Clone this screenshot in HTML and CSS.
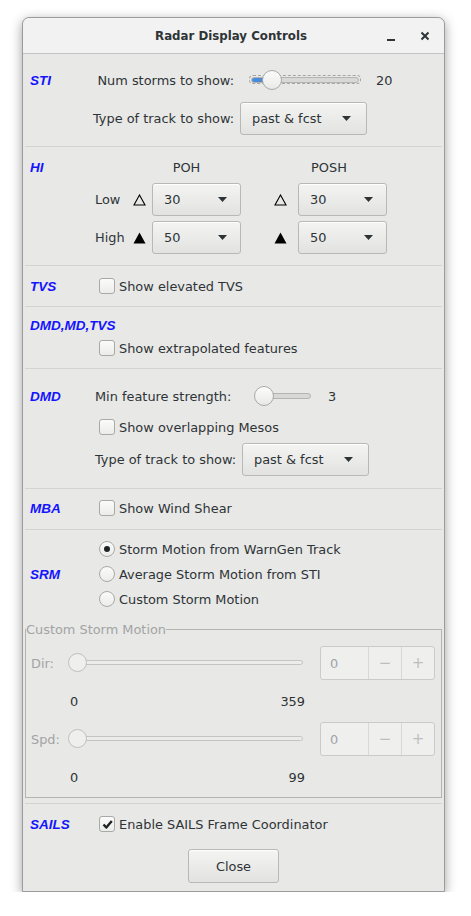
FILE: index.html
```html
<!DOCTYPE html>
<html>
<head>
<meta charset="utf-8">
<link rel="stylesheet" href="styles.css">
</head>
<body>
<div class="window">
  <div class="titlebar">
    <div></div>
    <div class="title">Radar Display Controls</div>
    <div class="tb-buttons">
      <svg class="tb-min" width="10" height="10" viewBox="0 0 10 10"><rect x="1" y="7" width="8" height="2" fill="#2e3436"/></svg>
      <svg class="tb-close" width="10" height="10" viewBox="0 0 10 10"><path d="M1.5 1.5 L8.5 8.5 M8.5 1.5 L1.5 8.5" stroke="#2e3436" stroke-width="2"/></svg>
    </div>
  </div>
  <div class="content">
    <!-- STI -->
    <div class="section sti">
      <div class="tag h24">STI</div>
      <div class="body">
        <div class="row h24">
          <div class="rlabel">Num storms to show:</div>
          <div class="slider sti-slider focus">
            <div class="trough"><div class="fill" style="width:15px"></div></div>
            <div class="knob" style="left:13px"></div>
          </div>
          <div class="val">20</div>
        </div>
        <div class="row h33 mt10">
          <div class="rlabel">Type of track to show:</div>
          <div class="combo wide ml6"><span>past &amp; fcst</span><svg width="9" height="5" viewBox="0 0 9 5"><path d="M0 0 H9 L4.5 5 Z" fill="#2e3436"/></svg></div>
        </div>
      </div>
    </div>
    <div class="sep"></div>
    <!-- HI -->
    <div class="section hi">
      <div class="tag h20">HI</div>
      <div class="body">
        <div class="row h20">
          <div class="lowcell"></div>
          <div class="hdr1">POH</div>
          <div class="hdr2">POSH</div>
        </div>
        <div class="row h33 mt6">
          <div class="lowcell">Low</div>
          <svg class="tri" width="13" height="12" viewBox="0 0 13 12"><path d="M6.5 1 L12 11 H1 Z" fill="none" stroke="#000" stroke-width="1.1"/></svg>
          <div class="combo small ml6"><span>30</span><svg width="9" height="5" viewBox="0 0 9 5"><path d="M0 0 H9 L4.5 5 Z" fill="#2e3436"/></svg></div>
          <svg class="tri gap33" width="13" height="12" viewBox="0 0 13 12"><path d="M6.5 1 L12 11 H1 Z" fill="none" stroke="#000" stroke-width="1.1"/></svg>
          <div class="combo small ml11"><span>30</span><svg width="9" height="5" viewBox="0 0 9 5"><path d="M0 0 H9 L4.5 5 Z" fill="#2e3436"/></svg></div>
        </div>
        <div class="row h33 mt5">
          <div class="lowcell">High</div>
          <svg class="tri" width="13" height="12" viewBox="0 0 13 12"><path d="M6.5 0.5 L12.5 11.5 H0.5 Z" fill="#000"/></svg>
          <div class="combo small ml6"><span>50</span><svg width="9" height="5" viewBox="0 0 9 5"><path d="M0 0 H9 L4.5 5 Z" fill="#2e3436"/></svg></div>
          <svg class="tri gap33" width="13" height="12" viewBox="0 0 13 12"><path d="M6.5 0.5 L12.5 11.5 H0.5 Z" fill="#000"/></svg>
          <div class="combo small ml11"><span>50</span><svg width="9" height="5" viewBox="0 0 9 5"><path d="M0 0 H9 L4.5 5 Z" fill="#2e3436"/></svg></div>
        </div>
      </div>
    </div>
    <div class="sep"></div>
    <!-- TVS -->
    <div class="section tvs">
      <div class="tag h22">TVS</div>
      <div class="body">
        <label class="row h22 check"><span class="cb"></span><span>Show elevated TVS</span></label>
      </div>
    </div>
    <div class="sep"></div>
    <!-- DMD,MD,TVS -->
    <div class="section stack dmdmd">
      <div class="tag h20">DMD,MD,TVS</div>
      <div class="body indent">
        <label class="row h22 check mt2"><span class="cb"></span><span>Show extrapolated features</span></label>
      </div>
    </div>
    <div class="sep"></div>
    <!-- DMD -->
    <div class="section dmd">
      <div class="tag h24">DMD</div>
      <div class="body">
        <div class="row h24">
          <div class="dmdlabel">Min feature strength:</div>
          <div class="slider dmd-slider">
            <div class="trough"><div class="fill" style="width:3px"></div></div>
            <div class="knob" style="left:0px"></div>
          </div>
          <div class="val3">3</div>
        </div>
        <label class="row h22 check mt8"><span class="cb"></span><span>Show overlapping Mesos</span></label>
        <div class="row h33 mt5">
          <div class="dmdlabel2">Type of track to show:</div>
          <div class="combo wide ml6"><span>past &amp; fcst</span><svg width="9" height="5" viewBox="0 0 9 5"><path d="M0 0 H9 L4.5 5 Z" fill="#2e3436"/></svg></div>
        </div>
      </div>
    </div>
    <div class="sep"></div>
    <!-- MBA -->
    <div class="section mba">
      <div class="tag h22">MBA</div>
      <div class="body">
        <label class="row h22 check"><span class="cb"></span><span>Show Wind Shear</span></label>
      </div>
    </div>
    <div class="sep"></div>
    <!-- SRM -->
    <div class="section srm">
      <div class="tag srmtag">SRM</div>
      <div class="body">
        <label class="row h22 check"><span class="rb on"></span><span>Storm Motion from WarnGen Track</span></label>
        <label class="row h22 check mt3"><span class="rb"></span><span>Average Storm Motion from STI</span></label>
        <label class="row h22 check mt3"><span class="rb"></span><span>Custom Storm Motion</span></label>
      </div>
    </div>
    <fieldset class="frame">
      <legend>Custom Storm Motion</legend>
      <div class="frame-inner">
        <div class="frow">
          <div class="flabel">Dir:</div>
          <div class="slider dis-slider">
            <div class="trough"></div>
            <div class="knob" style="left:0px"></div>
          </div>
          <div class="spin"><span class="spin-val">0</span><span class="spin-btn">&minus;</span><span class="spin-btn">+</span></div>
        </div>
        <div class="nums"><span>0</span><span>359</span></div>
        <div class="frow mt12">
          <div class="flabel">Spd:</div>
          <div class="slider dis-slider">
            <div class="trough"></div>
            <div class="knob" style="left:0px"></div>
          </div>
          <div class="spin"><span class="spin-val">0</span><span class="spin-btn">&minus;</span><span class="spin-btn">+</span></div>
        </div>
        <div class="nums"><span>0</span><span>99</span></div>
      </div>
    </fieldset>
    <div class="sep"></div>
    <!-- SAILS -->
    <div class="section sails">
      <div class="tag h22">SAILS</div>
      <div class="body">
        <label class="row h22 check"><span class="cb checked"><svg width="13" height="13" viewBox="0 0 13 13"><path d="M2.5 6.5 L5.3 9.5 L10.8 3" fill="none" stroke="#1e2224" stroke-width="2.4" stroke-linejoin="round"/></svg></span><span>Enable SAILS Frame Coordinator</span></label>
      </div>
    </div>
    <div class="footer">
      <div class="button">Close</div>
    </div>
  </div>
</div>
</body>
</html>
```
FILE: styles.css
```css
html, body {
  margin: 0;
  padding: 0;
  background: #ffffff;
}
body {
  font-family: "DejaVu Sans", sans-serif;
  font-size: 12.9px;
  color: #2e3436;
}
.window {
  margin: 17px 0 0 22px;
  width: 421px;
  border: 1px solid #9b9b9b;
  border-radius: 7px 7px 0 0;
  background: #e8e8e7;
  box-shadow: 0 3px 12px rgba(0,0,0,0.38);
}
.titlebar {
  height: 35px;
  border-bottom: 1px solid #c2c2c2;
  background: #f2f2f2;
  border-radius: 7px 7px 0 0;
  display: grid;
  grid-template-columns: 1fr auto 1fr;
  align-items: center;
}
.title {
  font-weight: bold;
  font-size: 11.8px;
  color: #2e3436;
  padding-right: 5px;
}
.tb-buttons {
  display: flex;
  justify-content: flex-end;
  align-items: center;
  padding-right: 14px;
  gap: 24px;
}
.tb-min { margin-top: 3px; }
.sep {
  height: 1px;
  background: #d3d3d2;
  margin: 0 2px;
}
.section {
  display: flex;
  padding-left: 7px;
}
.section.stack { display: block; }
.tag {
  width: 63px;
  flex: none;
  font-family: "Liberation Sans", Arial, sans-serif;
  font-weight: bold;
  font-style: italic;
  font-size: 13.5px;
  color: #1414ff;
  display: flex;
  align-items: center;
  white-space: nowrap;
}
.body {
  display: flex;
  flex-direction: column;
}
.body.indent { padding-left: 63px; }
.row {
  display: flex;
  align-items: center;
}
.h20 { height: 20px; }
.h22 { height: 22px; }
.h24 { height: 24px; }
.h33 { height: 33px; }
.mt2 { margin-top: 2px; }
.mt3 { margin-top: 3px; }
.mt5 { margin-top: 5px; }
.mt6 { margin-top: 6px; }
.mt8 { margin-top: 8px; }
.mt10 { margin-top: 10px; }
.mt12 { margin-top: 12px; }
.ml6 { margin-left: 6px; }
.ml11 { margin-left: 11px; }

.sti { padding-top: 14px; padding-bottom: 11px; }
.hi { padding-top: 10px; padding-bottom: 11px; }
.tvs { padding-top: 9px; padding-bottom: 9px; }
.dmdmd { padding-top: 8px; padding-bottom: 9px; }
.dmd { padding-top: 15px; padding-bottom: 12px; }
.mba { padding-top: 8px; padding-bottom: 10px; }
.srm { padding-top: 8px; padding-bottom: 11px; }
.sails { padding-top: 9px; }

.rlabel {
  width: 141px;
  text-align: right;
  white-space: nowrap;
}
.val { margin-left: 15px; }
.val3 { margin-left: 17px; }

.combo {
  border: 1px solid #b8b8b5;
  border-radius: 3px;
  background: linear-gradient(#f4f4f3, #e2e2e1);
  box-shadow: inset 0 1px #ffffff;
  display: flex;
  align-items: center;
  justify-content: space-between;
  box-sizing: border-box;
  height: 33px;
}
.combo.wide { width: 127px; padding: 0 15px 0 11px; }
.combo.small { width: 89px; padding: 0 13px 0 11px; }

/* HI */
.lowcell { width: 38px; padding-left: 2px; }
.hdr1 { width: 107px; text-align: center; }
.hdr2 { width: 112px; margin-left: 33px; text-align: center; }
.tri { flex: none; }
.tri.gap33 { margin-left: 33px; }

/* check / radio */
.check { gap: 4px; padding-left: 6px; }
.cb {
  width: 14px;
  height: 14px;
  border: 1px solid #a9a9a6;
  border-radius: 3px;
  background: linear-gradient(#fbfbfb, #ececeb);
  flex: none;
  display: flex;
  align-items: center;
  justify-content: center;
}
.rb {
  width: 14px;
  height: 14px;
  border: 1px solid #a9a9a6;
  border-radius: 50%;
  background: linear-gradient(#fbfbfb, #ececeb);
  flex: none;
  display: flex;
  align-items: center;
  justify-content: center;
}
.rb.on::after {
  content: "";
  width: 6px;
  height: 6px;
  border-radius: 50%;
  background: #1e2224;
}
.srmtag { height: 72px; }

/* sliders */
.slider {
  position: relative;
  height: 24px;
  flex: none;
}
.trough {
  position: absolute;
  top: 9px;
  height: 4px;
  border: 1px solid #b4b4b1;
  border-radius: 3px;
  background: #d8d8d7;
  overflow: hidden;
}
.fill {
  height: 100%;
  background: #4a8ad8;
  border-right: 1px solid #23598f;
}
.knob {
  position: absolute;
  top: 2px;
  border: 1px solid #a9a9a6;
  border-radius: 50%;
  background: linear-gradient(#fcfcfc, #e9e9e8);
  box-sizing: border-box;
  width: 20px;
  height: 20px;
}
.sti-slider { width: 112px; margin-left: 15px; }
.sti-slider .trough { left: 2px; right: 2px; }
.sti-slider.focus::before {
  content: "";
  position: absolute;
  left: 0; right: 0;
  top: 7px; height: 9px;
  border: 1px dashed #a5a5a3;
  border-radius: 4px;
  box-sizing: border-box;
}
.dmdlabel { width: 159px; padding-left: 2px; white-space: nowrap; }
.dmdlabel2 { width: 141px; padding-left: 2px; white-space: nowrap; }
.dmd-slider { width: 57px; }
.dmd-slider .trough { left: 1px; right: 0; }

/* frame */
.frame {
  margin: 0 2px 5px 2px;
  padding: 0;
  border: 1px solid #b4b4b2;
  min-width: 0;
}
.frame legend {
  padding: 0;
  margin-left: 0;
  color: #a2a4a4;
  line-height: 17px;
  height: 17px;
}
.frame-inner {
  padding: 8px 6px 11px 5px;
}
.frow {
  display: flex;
  align-items: center;
  height: 34px;
}
.flabel {
  width: 37px;
  color: #a2a4a4;
}
.dis-slider { width: 235px; height: 20px; }
.dis-slider .trough {
  top: 7px;
  left: 5px;
  right: 0;
  height: 3px;
  background: #ececeb;
  border-color: #c4c4c2;
}
.dis-slider .knob {
  top: 0;
  width: 19px;
  height: 19px;
  border-color: #c0c0be;
  background: #efefee;
}
.spin {
  margin-left: 17px;
  width: 115px;
  height: 34px;
  box-sizing: border-box;
  border: 1px solid #cbcbc9;
  border-radius: 3px;
  background: #efefee;
  display: flex;
  color: #a2a4a4;
}
.spin-val {
  width: 48px;
  padding-left: 9px;
  display: flex;
  align-items: center;
  box-sizing: border-box;
}
.spin-btn {
  width: 33px;
  border-left: 1px solid #d8d8d6;
  display: flex;
  align-items: center;
  justify-content: center;
  color: #bdbebe;
  font-size: 15px;
}
.nums {
  margin-top: 12px;
  height: 18px;
  width: 235px;
  margin-left: 39px;
  display: flex;
  justify-content: space-between;
  align-items: center;
}

/* footer */
.footer {
  display: flex;
  justify-content: center;
  padding: 14px 0 8px 0;
}
.button {
  width: 91px;
  height: 34px;
  box-sizing: border-box;
  border: 1px solid #b8b8b5;
  border-radius: 3px;
  background: linear-gradient(#f4f4f3, #e2e2e1);
  box-shadow: inset 0 1px #ffffff;
  display: flex;
  align-items: center;
  justify-content: center;
}
```
